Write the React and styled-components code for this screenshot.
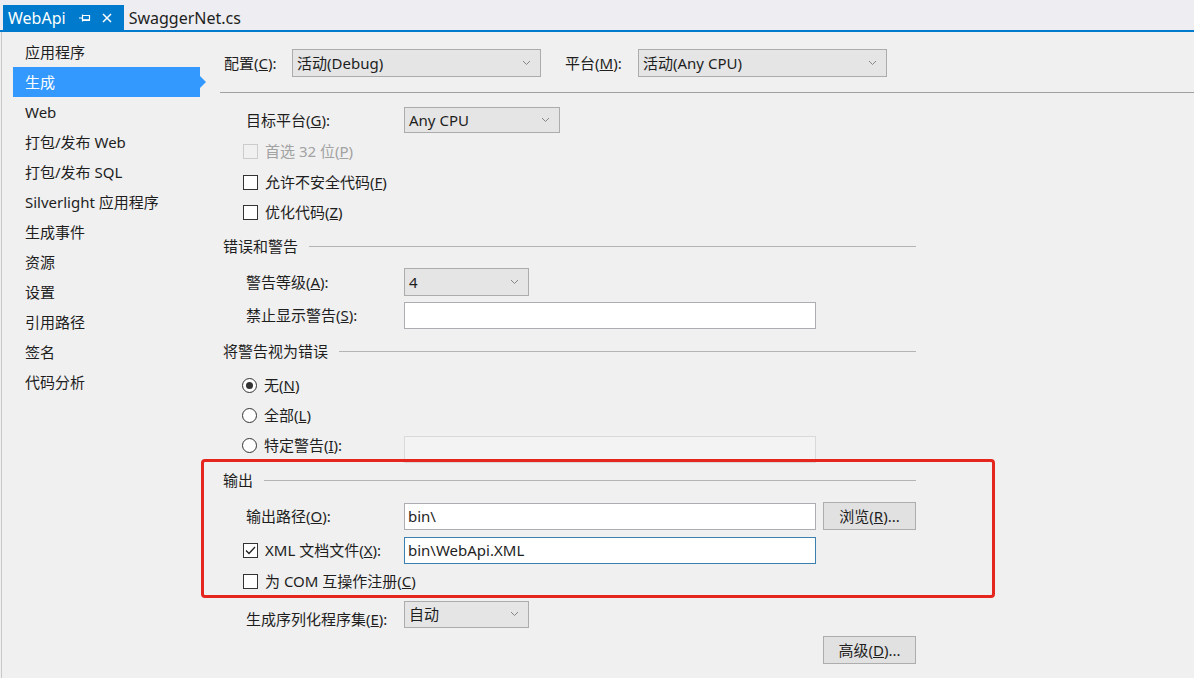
import React from 'react'
import styled, { createGlobalStyle } from 'styled-components'

const GlobalStyle = createGlobalStyle`
  html, body {
    margin: 0;
    padding: 0;
  }
  * {
    box-sizing: border-box;
  }
  body {
    background: #f0f0f0;
    font-family: "Noto Sans", "Noto Sans CJK SC", sans-serif;
    color: #1e1e1e;
  }
`

const Page = styled.div`
  width: 1194px;
  height: 678px;
  overflow: hidden;
  display: flex;
  flex-direction: column;
  background: #f0f0f0;
`

const TabBar = styled.div`
  height: 32px;
  flex-shrink: 0;
  background: #eeeef2;
  border-bottom: 2px solid #007acc;
  display: flex;
  align-items: flex-end;
  padding-left: 3px;
`

const Tab = styled.div`
  height: 25px;
  display: flex;
  align-items: center;
  padding: 0 ${(p) => (p.$active ? 12 : 9)}px 0 5px;
  font-size: 16px;
  background: ${(p) => (p.$active ? '#007acc' : 'transparent')};
  color: ${(p) => (p.$active ? '#ffffff' : '#1e1e1e')};
`

const TabIcon = styled.svg`
  margin-left: ${(p) => p.$gap}px;
  flex-shrink: 0;
`

const Body = styled.div`
  flex: 1;
  display: flex;
  margin-left: 1px;
  border-left: 1px solid #c9c9c9;
`

const Nav = styled.ul`
  width: 218px;
  flex-shrink: 0;
  margin: 0;
  padding: 5px 0 0 11px;
  list-style: none;
`

const NavItem = styled.li`
  position: relative;
  width: 187px;
  height: 30px;
  display: flex;
  align-items: center;
  padding-left: 12px;
  padding-bottom: 1px;
  font-size: 15px;
  white-space: nowrap;
  background: ${(p) => (p.$active ? '#3399ff' : 'transparent')};
  color: ${(p) => (p.$active ? '#ffffff' : '#1e1e1e')};

  &::after {
    content: '';
    display: ${(p) => (p.$active ? 'block' : 'none')};
    position: absolute;
    right: -6px;
    top: 50%;
    margin-top: -6px;
    border-style: solid;
    border-width: 6px 0 6px 6px;
    border-color: transparent transparent transparent #3399ff;
  }
`

const Main = styled.div`
  flex: 1;
  min-width: 0;
  display: flex;
  flex-direction: column;
`

const ConfigRow = styled.div`
  margin-top: 17px;
  height: 28px;
  display: flex;
  align-items: center;
  padding-left: 4px;
`

const FieldLabel = styled.span`
  width: ${(p) => p.$w}px;
  flex-shrink: 0;
  font-size: 15px;
  white-space: nowrap;
  padding-top: ${(p) => p.$down || 0}px;
  padding-bottom: 1px;
  color: ${(p) => (p.$disabled ? '#a2a2a2' : '#1e1e1e')};
`

const SelectBox = styled.div`
  width: ${(p) => p.$w}px;
  height: ${(p) => p.$h}px;
  flex-shrink: 0;
  display: flex;
  align-items: center;
  justify-content: space-between;
  padding: 0 9px 1px 4px;
  background: #e5e5e5;
  border: 1px solid #acacac;
  font-size: 15px;
`

const Divider = styled.div`
  margin-top: 15px;
  height: 1px;
  background: #a0a0a0;
`

const Form = styled.div`
  width: 693px;
  margin: 12px 0 0 3px;
  display: flex;
  flex-direction: column;
`

const Row = styled.div`
  height: ${(p) => p.$h}px;
  display: flex;
  align-items: center;
  padding-left: ${(p) => p.$indent || 0}px;
  justify-content: ${(p) => (p.$end ? 'flex-end' : 'flex-start')};
`

const HeaderText = styled.span`
  font-size: 15px;
  white-space: nowrap;
  padding-bottom: 1px;
`

const HeaderLine = styled.div`
  flex: 1;
  height: 1px;
  margin-left: 11px;
  background: #b4b4b4;
`

const BoxMark = styled.span`
  width: 15px;
  height: 15px;
  flex-shrink: 0;
  margin-right: 7px;
  display: flex;
  align-items: center;
  justify-content: center;
  background: ${(p) => (p.$disabled ? '#f0f0f0' : '#ffffff')};
  border: 1px solid ${(p) => (p.$disabled ? '#cccccc' : '#333333')};
  border-radius: ${(p) => (p.$round ? '50%' : '0')};
`

const Dot = styled.span`
  width: 7px;
  height: 7px;
  border-radius: 50%;
  background: #333333;
`

const TextBox = styled.div`
  width: 412px;
  height: 27px;
  flex-shrink: 0;
  display: flex;
  align-items: center;
  padding: 0 0 1px 3px;
  font-size: 15px;
  background: ${(p) => (p.$disabled ? '#f3f3f3' : '#ffffff')};
  border: 1px solid
    ${(p) => (p.$focus ? '#3b80ae' : p.$disabled ? '#d9d9d9' : '#abadb3')};
  align-self: ${(p) => (p.$top ? 'flex-start' : 'center')};
  margin-top: ${(p) => p.$top || 0}px;
`

const Button = styled.div`
  width: 93px;
  height: 28px;
  flex-shrink: 0;
  margin-left: ${(p) => p.$gap || 0}px;
  display: flex;
  align-items: center;
  justify-content: center;
  padding-bottom: 1px;
  background: #e1e1e1;
  border: 1px solid #adadad;
  font-size: 15px;
`

const OutputGroup = styled.div`
  position: relative;
  display: flex;
  flex-direction: column;
`

const RedFrame = styled.div`
  position: absolute;
  top: 0;
  left: -22px;
  right: -79px;
  bottom: -5px;
  border: 3px solid #e5261f;
  border-radius: 4px;
  pointer-events: none;
`

const Chevron = () => (
  <svg width='9' height='6' viewBox='0 0 9 6'>
    <path d='M1 1 L4.5 4.5 L8 1' fill='none' stroke='#858585' strokeWidth='1' />
  </svg>
)

const Select = ({ w, h, children }) => (
  <SelectBox $w={w} $h={h}>
    <span>{children}</span>
    <Chevron />
  </SelectBox>
)

const CheckBox = ({ checked, disabled }) => (
  <BoxMark $disabled={disabled}>
    {checked && (
      <svg width='11' height='9' viewBox='0 0 11 9'>
        <path d='M1 4.5 L4 7.5 L10 1' fill='none' stroke='#222' strokeWidth='1.3' />
      </svg>
    )}
  </BoxMark>
)

const Radio = ({ checked }) => (
  <BoxMark $round>{checked && <Dot />}</BoxMark>
)

const SectionHeader = ({ h, children }) => (
  <Row $h={h}>
    <HeaderText>{children}</HeaderText>
    <HeaderLine />
  </Row>
)

const navItems = [
  '应用程序',
  '生成',
  'Web',
  '打包/发布 Web',
  '打包/发布 SQL',
  'Silverlight 应用程序',
  '生成事件',
  '资源',
  '设置',
  '引用路径',
  '签名',
  '代码分析',
]

export default function App() {
  return (
    <Page>
      <GlobalStyle />
      <TabBar>
        <Tab $active>
          WebApi
          <TabIcon $gap={13} width='12' height='10' viewBox='0 0 12 10'>
            <path d='M0 5 H3.5 M3.5 1.5 V8.5' stroke='#fff' strokeWidth='1.2' fill='none' />
            <path d='M3.5 2.5 H10.5 V7 H3.5' stroke='#fff' strokeWidth='1.2' fill='none' />
            <path d='M3.5 7.2 H11' stroke='#fff' strokeWidth='1.6' />
          </TabIcon>
          <TabIcon $gap={11} width='10' height='10' viewBox='0 0 10 10'>
            <path d='M1 1 L9 9 M9 1 L1 9' stroke='#fff' strokeWidth='1.5' />
          </TabIcon>
        </Tab>
        <Tab>SwaggerNet.cs</Tab>
      </TabBar>
      <Body>
        <Nav>
          {navItems.map((item) => (
            <NavItem key={item} $active={item === '生成'}>
              {item}
            </NavItem>
          ))}
        </Nav>
        <Main>
          <ConfigRow>
            <FieldLabel $w={68}>
              配置(<u>C</u>):
            </FieldLabel>
            <Select w={249} h={28}>
              活动(Debug)
            </Select>
            <FieldLabel $w={73} style={{ marginLeft: 24 }}>
              平台(<u>M</u>):
            </FieldLabel>
            <Select w={249} h={28}>
              活动(Any CPU)
            </Select>
          </ConfigRow>
          <Divider />
          <Form>
            <Row $h={30} $indent={23}>
              <FieldLabel $w={158}>
                目标平台(<u>G</u>):
              </FieldLabel>
              <Select w={156} h={26}>
                Any CPU
              </Select>
            </Row>
            <Row $h={32} $indent={20}>
              <CheckBox disabled />
              <FieldLabel $disabled>
                首选 32 位(<u>P</u>)
              </FieldLabel>
            </Row>
            <Row $h={30} $indent={20}>
              <CheckBox />
              <FieldLabel>
                允许不安全代码(<u>F</u>)
              </FieldLabel>
            </Row>
            <Row $h={30} $indent={20}>
              <CheckBox />
              <FieldLabel>
                优化代码(<u>Z</u>)
              </FieldLabel>
            </Row>
            <SectionHeader h={38}>错误和警告</SectionHeader>
            <Row $h={34} $indent={23}>
              <FieldLabel $w={158}>
                警告等级(<u>A</u>):
              </FieldLabel>
              <Select w={125} h={28}>
                4
              </Select>
            </Row>
            <Row $h={32} $indent={23}>
              <FieldLabel $w={158}>
                禁止显示警告(<u>S</u>):
              </FieldLabel>
              <TextBox />
            </Row>
            <SectionHeader h={40}>将警告视为错误</SectionHeader>
            <Row $h={28} $indent={19}>
              <Radio checked />
              <FieldLabel>
                无(<u>N</u>)
              </FieldLabel>
            </Row>
            <Row $h={32} $indent={19}>
              <Radio />
              <FieldLabel>
                全部(<u>L</u>)
              </FieldLabel>
            </Row>
            <Row $h={28} $indent={19}>
              <Radio />
              <FieldLabel $w={140}>
                特定警告(<u>I</u>):
              </FieldLabel>
              <TextBox $disabled $top={5} />
            </Row>
            <OutputGroup>
              <SectionHeader h={42}>输出</SectionHeader>
              <Row $h={30} $indent={23}>
                <FieldLabel $w={158}>
                  输出路径(<u>O</u>):
                </FieldLabel>
                <TextBox>bin\</TextBox>
                <Button $gap={7}>
                  浏览(<u>R</u>)...
                </Button>
              </Row>
              <Row $h={38} $indent={20}>
                <CheckBox checked />
                <FieldLabel $w={139}>
                  XML 文档文件(<u>X</u>):
                </FieldLabel>
                <TextBox $focus>bin\WebApi.XML</TextBox>
              </Row>
              <Row $h={24} $indent={20}>
                <CheckBox />
                <FieldLabel>
                  为 COM 互操作注册(<u>C</u>)
                </FieldLabel>
              </Row>
              <RedFrame />
            </OutputGroup>
            <Row $h={42} $indent={23}>
              <FieldLabel $w={158} $down={10}>
                生成序列化程序集(<u>E</u>):
              </FieldLabel>
              <Select w={125} h={27}>
                自动
              </Select>
            </Row>
            <Row $h={30} $end>
              <Button>
                高级(<u>D</u>)...
              </Button>
            </Row>
          </Form>
        </Main>
      </Body>
    </Page>
  )
}
